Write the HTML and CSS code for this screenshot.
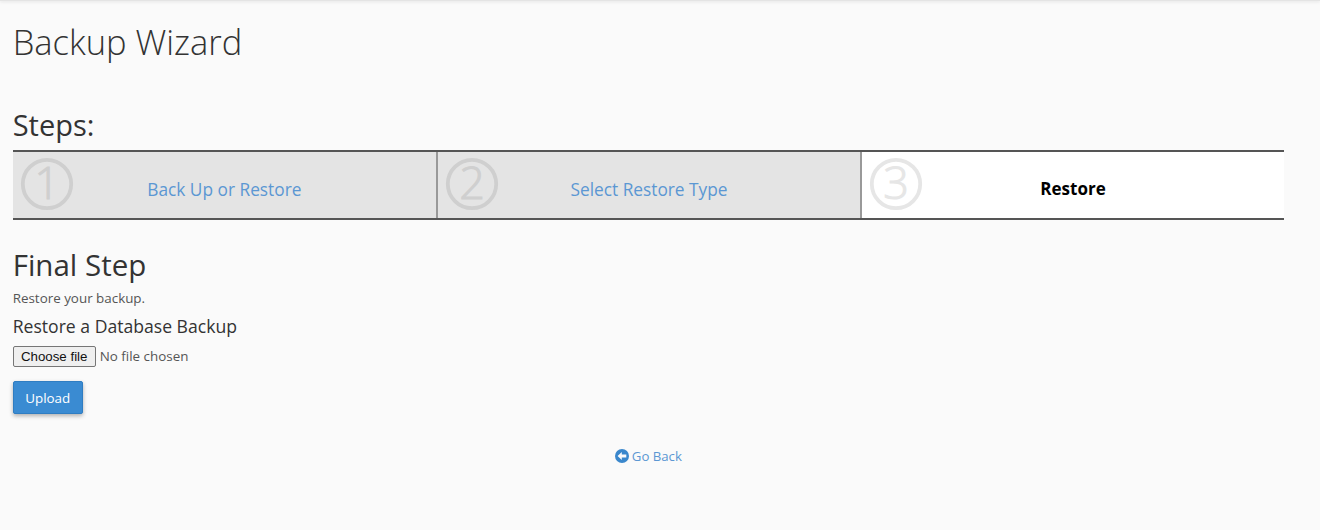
FILE: index.html
```html
<!DOCTYPE html>
<html lang="en">
<head>
<meta charset="utf-8">
<title>Backup Wizard</title>
<link rel="stylesheet" href="styles.css">
</head>
<body>
<div class="topshade"></div>
<main class="page">
  <h1 class="title">Backup Wizard</h1>
  <h2 class="steps-title">Steps:</h2>
  <div class="steps">
    <div class="step">
      <svg class="num" viewBox="0 0 54 54"><circle cx="27" cy="27" r="24.2"/><text x="27" y="42" text-anchor="middle">1</text></svg>
      <a class="step-label" href="#">Back Up or Restore</a>
    </div>
    <div class="step">
      <svg class="num" viewBox="0 0 54 54"><circle cx="27" cy="27" r="24.2"/><text x="27" y="42" text-anchor="middle">2</text></svg>
      <a class="step-label" href="#">Select Restore Type</a>
    </div>
    <div class="step current">
      <svg class="num" viewBox="0 0 54 54"><circle cx="27" cy="27" r="24.2"/><text x="27" y="42" text-anchor="middle">3</text></svg>
      <span class="step-label">Restore</span>
    </div>
  </div>
  <h2 class="final">Final Step</h2>
  <p class="desc">Restore your backup.</p>
  <h3 class="sub">Restore a Database Backup</h3>
  <div class="file-row">
    <button class="file-btn" type="button">Choose file</button>
    <span class="file-name">No file chosen</span>
  </div>
  <button class="upload" type="button">Upload</button>
  <div class="back-row">
    <a class="back" href="#">
      <svg class="back-icon" viewBox="0 0 14 14"><circle cx="7" cy="7" r="7"/><path d="M2.6 7 6.800 3v2.500h4.500v3H6.800V11z"/></svg>
      Go Back
    </a>
  </div>
</main>
</body>
</html>
```
FILE: styles.css
```css
html, body { margin: 0; padding: 0; height: 100%; }
body {
  background: #fafafa;
  color: #333;
  font-family: "Open Sans", sans-serif;
  font-size: 12px;
  overflow: hidden;
}
.topshade {
  height: 1px;
  background: #e4e4e4;
  box-shadow: 0 1px 3px rgba(0,0,0,.15);
}
.page { padding: 0 36px 0 12.700px; }
.title {
  margin: 17px 0 0;
  font-size: 34.5px;
  font-weight: 300;
  line-height: 48px;
  color: #333;
}
.steps-title {
  margin: 40px 0 0;
  font-size: 29px;
  font-weight: 400;
  line-height: 38px;
  color: #333;
}
.steps {
  display: flex;
  margin-top: 6px;
  height: 70px;
  border-top: 2px solid #555;
  border-bottom: 2px solid #555;
  box-sizing: border-box;
}
.step {
  flex: 1 1 0;
  position: relative;
  background: #e4e4e4;
  border-right: 2px solid #999;
  display: flex;
  align-items: center;
  justify-content: center;
  padding-top: 10px;
  box-sizing: border-box;
}
.step:first-child { flex-grow: 1.003; }
.step.current { background: #fff; border-right: 0; }
.num {
  position: absolute;
  left: 7px;
  top: 5px;
  width: 54px;
  height: 54px;
  overflow: visible;
}
.num circle { fill: none; stroke: #cfcfcf; stroke-width: 3.8; }
.num text {
  font-family: "Open Sans", sans-serif;
  font-size: 45px;
  font-weight: 300;
  fill: #cfcfcf;
  stroke: #cfcfcf;
  stroke-width: 1;
}
.current .num circle { stroke: #e6e6e6; }
.current .num text { fill: #e6e6e6; stroke: #e6e6e6; }
.step-label {
  font-size: 17.3px;
  line-height: 24px;
  color: #5b97d3;
  text-decoration: none;
}
.current .step-label {
  font-weight: 700;
  color: #000;
  font-size: 17px;
  padding-bottom: 2px;
}
.final {
  margin: 25px 0 0;
  font-size: 29.5px;
  font-weight: 400;
  line-height: 40px;
  color: #333;
}
.desc {
  margin: 4px 0 0;
  font-size: 13.4px;
  line-height: 18px;
  color: #555;
}
.sub {
  margin: 7px 0 0;
  font-size: 17.6px;
  font-weight: 400;
  line-height: 24px;
  color: #333;
}
.file-row {
  display: flex;
  align-items: center;
  margin-top: 8px;
  height: 21px;
}
.file-btn {
  box-sizing: border-box;
  width: 83px;
  height: 21px;
  padding: 0;
  font-family: "Liberation Sans", sans-serif;
  font-size: 13.3px;
  color: #111;
  background: #efefef;
  border: 1px solid #767676;
  border-radius: 2px;
}
.file-name {
  margin-left: 4px;
  padding-bottom: 2px;
  font-family: "Open Sans", sans-serif;
  font-size: 13.4px;
  color: #555;
}
.upload {
  display: block;
  box-sizing: border-box;
  margin-top: 14px;
  width: 70px;
  height: 33px;
  padding: 0;
  font-family: "Open Sans", sans-serif;
  font-size: 13.4px;
  color: #fff;
  background: #3a8bd2;
  border: 1px solid #2f7dc2;
  border-radius: 2px;
  box-shadow: 0 2px 4px rgba(0,0,0,.3);
}
.back-row { margin-top: 33px; text-align: center; }
.back {
  display: inline-flex;
  align-items: center;
  gap: 3px;
  font-size: 13.2px;
  line-height: 18px;
  color: #5b97d3;
  text-decoration: none;
}
.back-icon { width: 14px; height: 14px; }
.back-icon circle { fill: #3a87cc; }
.back-icon path { fill: #fafafa; }
```
